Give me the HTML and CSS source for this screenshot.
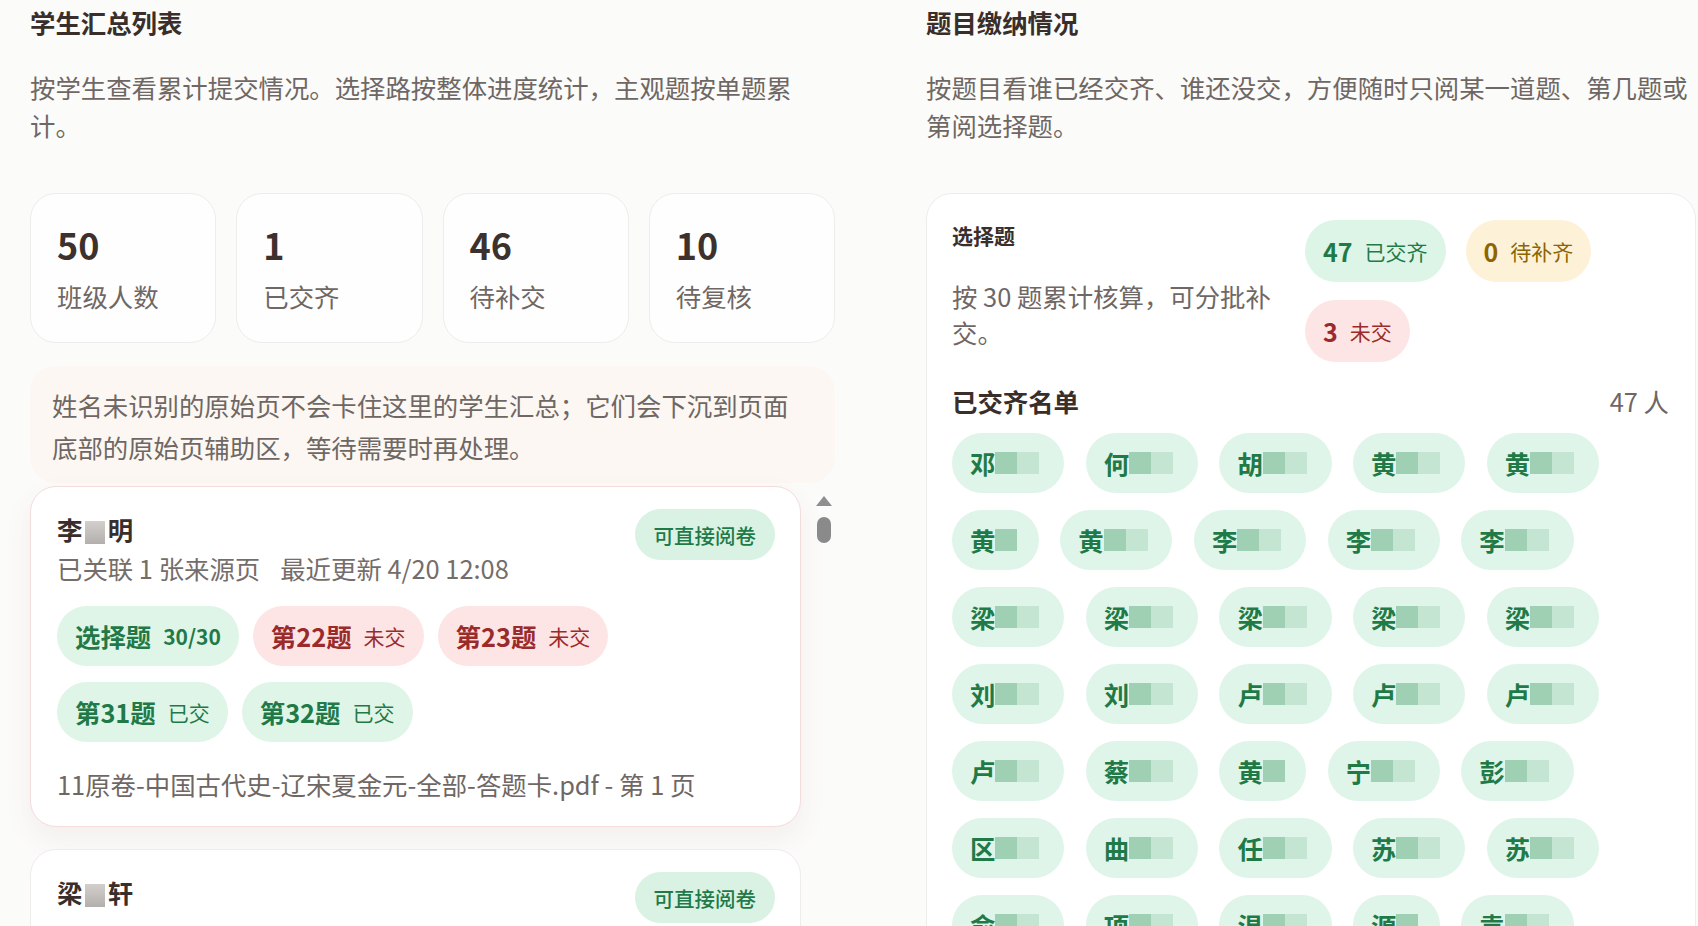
FILE: index.html
```html
<!DOCTYPE html>
<html lang="zh-CN">
<head>
<meta charset="utf-8">
<title>学生汇总列表</title>
<link rel="stylesheet" href="styles.css">
</head>
<body>
<div class="page">
  <section class="col">
    <h2 class="sec-title">学生汇总列表</h2>
    <p class="sec-desc">按学生查看累计提交情况。选择路按整体进度统计，主观题按单题累计。</p>
    <div class="stats">
      <div class="stat"><div class="stat-num">50</div><div class="stat-label">班级人数</div></div>
      <div class="stat"><div class="stat-num">1</div><div class="stat-label">已交齐</div></div>
      <div class="stat"><div class="stat-num">46</div><div class="stat-label">待补交</div></div>
      <div class="stat"><div class="stat-num">10</div><div class="stat-label">待复核</div></div>
    </div>
    <div class="notice">姓名未识别的原始页不会卡住这里的学生汇总；它们会下沉到页面底部的原始页辅助区，等待需要时再处理。</div>
    <div class="list-area">
      <div class="student-list">
        <article class="student-card alert">
          <div class="card-head">
            <div class="card-info">
              <div class="student-name">李<span class="name-blur"></span>明</div>
              <div class="student-meta"><span>已关联 1 张来源页</span><span>最近更新 4/20 12:08</span></div>
            </div>
            <span class="read-badge">可直接阅卷</span>
          </div>
          <div class="chips">
            <span class="chip ok"><span class="chip-main">选择题</span><span class="chip-sub num">30/30</span></span>
            <span class="chip miss"><span class="chip-main">第22题</span><span class="chip-sub">未交</span></span>
            <span class="chip miss"><span class="chip-main">第23题</span><span class="chip-sub">未交</span></span>
            <span class="chip ok"><span class="chip-main">第31题</span><span class="chip-sub">已交</span></span>
            <span class="chip ok"><span class="chip-main">第32题</span><span class="chip-sub">已交</span></span>
          </div>
          <div class="file-line">11原卷-中国古代史-辽宋夏金元-全部-答题卡.pdf - 第 1 页</div>
        </article>
        <article class="student-card">
          <div class="card-head">
            <div class="card-info">
              <div class="student-name">梁<span class="name-blur"></span>轩</div>
            </div>
            <span class="read-badge">可直接阅卷</span>
          </div>
          <div class="chips">
            <span class="chip ok"><span class="chip-main">选择题</span><span class="chip-sub num">30/30</span></span>
          </div>
        </article>
      </div>
      <div class="scrollbar"><span class="sb-arrow"></span><span class="sb-thumb"></span></div>
    </div>
  </section>

  <section class="col">
    <h2 class="sec-title">题目缴纳情况</h2>
    <p class="sec-desc">按题目看谁已经交齐、谁还没交，方便随时只阅某一道题、第几题或第阅选择题。</p>
    <div class="q-card">
      <div class="q-head">
        <div class="q-info">
          <h3 class="q-title">选择题</h3>
          <p class="q-desc">按 30 题累计核算，可分批补交。</p>
        </div>
        <div class="q-badges">
          <span class="q-badge green"><b>47</b>已交齐</span>
          <span class="q-badge yellow"><b>0</b>待补齐</span>
          <span class="q-badge red"><b>3</b>未交</span>
        </div>
      </div>
      <div class="done-head"><h3>已交齐名单</h3><span class="done-count">47 人</span></div>
      <div class="name-grid">
        <span class="name-chip">邓<span class="mosaic m2"><i></i><i></i></span></span>
        <span class="name-chip">何<span class="mosaic m2"><i></i><i></i></span></span>
        <span class="name-chip">胡<span class="mosaic m2"><i></i><i></i></span></span>
        <span class="name-chip">黄<span class="mosaic m2"><i></i><i></i></span></span>
        <span class="name-chip">黄<span class="mosaic m2"><i></i><i></i></span></span>
        <span class="name-chip">黄<span class="mosaic m1"><i></i></span></span>
        <span class="name-chip">黄<span class="mosaic m2"><i></i><i></i></span></span>
        <span class="name-chip">李<span class="mosaic m2"><i></i><i></i></span></span>
        <span class="name-chip">李<span class="mosaic m2"><i></i><i></i></span></span>
        <span class="name-chip">李<span class="mosaic m2"><i></i><i></i></span></span>
        <span class="name-chip">梁<span class="mosaic m2"><i></i><i></i></span></span>
        <span class="name-chip">梁<span class="mosaic m2"><i></i><i></i></span></span>
        <span class="name-chip">梁<span class="mosaic m2"><i></i><i></i></span></span>
        <span class="name-chip">梁<span class="mosaic m2"><i></i><i></i></span></span>
        <span class="name-chip">梁<span class="mosaic m2"><i></i><i></i></span></span>
        <span class="name-chip">刘<span class="mosaic m2"><i></i><i></i></span></span>
        <span class="name-chip">刘<span class="mosaic m2"><i></i><i></i></span></span>
        <span class="name-chip">卢<span class="mosaic m2"><i></i><i></i></span></span>
        <span class="name-chip">卢<span class="mosaic m2"><i></i><i></i></span></span>
        <span class="name-chip">卢<span class="mosaic m2"><i></i><i></i></span></span>
        <span class="name-chip">卢<span class="mosaic m2"><i></i><i></i></span></span>
        <span class="name-chip">蔡<span class="mosaic m2"><i></i><i></i></span></span>
        <span class="name-chip">黄<span class="mosaic m1"><i></i></span></span>
        <span class="name-chip">宁<span class="mosaic m2"><i></i><i></i></span></span>
        <span class="name-chip">彭<span class="mosaic m2"><i></i><i></i></span></span>
        <span class="name-chip">区<span class="mosaic m2"><i></i><i></i></span></span>
        <span class="name-chip">曲<span class="mosaic m2"><i></i><i></i></span></span>
        <span class="name-chip">任<span class="mosaic m2"><i></i><i></i></span></span>
        <span class="name-chip">苏<span class="mosaic m2"><i></i><i></i></span></span>
        <span class="name-chip">苏<span class="mosaic m2"><i></i><i></i></span></span>
        <span class="name-chip">俞<span class="mosaic m2"><i></i><i></i></span></span>
        <span class="name-chip">项<span class="mosaic m2"><i></i><i></i></span></span>
        <span class="name-chip">温<span class="mosaic m2"><i></i><i></i></span></span>
        <span class="name-chip">源<span class="mosaic m1"><i></i></span></span>
        <span class="name-chip">袁<span class="mosaic m2"><i></i><i></i></span></span>
        <span class="name-chip">王<span class="mosaic m2"><i></i><i></i></span></span>
        <span class="name-chip">吴<span class="mosaic m2"><i></i><i></i></span></span>
        <span class="name-chip">谢<span class="mosaic m2"><i></i><i></i></span></span>
        <span class="name-chip">杨<span class="mosaic m2"><i></i><i></i></span></span>
        <span class="name-chip">叶<span class="mosaic m2"><i></i><i></i></span></span>
        <span class="name-chip">张<span class="mosaic m2"><i></i><i></i></span></span>
        <span class="name-chip">张<span class="mosaic m2"><i></i><i></i></span></span>
        <span class="name-chip">赵<span class="mosaic m2"><i></i><i></i></span></span>
        <span class="name-chip">郑<span class="mosaic m2"><i></i><i></i></span></span>
        <span class="name-chip">钟<span class="mosaic m2"><i></i><i></i></span></span>
        <span class="name-chip">周<span class="mosaic m2"><i></i><i></i></span></span>
        <span class="name-chip">朱<span class="mosaic m2"><i></i><i></i></span></span>
      </div>
    </div>
  </section>
</div>
</body>
</html>
```

FILE: styles.css
```css
* {
  box-sizing: border-box;
  margin: 0;
  padding: 0;
}

html,
body {
  height: 100%;
}

body {
  background: #fbfbfa;
  font-family: "Noto Sans CJK SC", "Noto Sans", sans-serif;
  color: #3a2e2b;
  overflow: hidden;
}

.page {
  display: grid;
  grid-template-columns: 805px 770px;
  column-gap: 91px;
  padding: 5px 0 0 30px;
  align-items: start;
}

.sec-title {
  font-size: 25.4px;
  line-height: 35px;
  font-weight: 700;
  color: #3a2e2b;
}

.sec-desc {
  margin-top: 29px;
  max-width: 770px;
  font-size: 25.4px;
  line-height: 37.5px;
  color: #6f6764;
}

/* stats */
.stats {
  margin-top: 49px;
  display: grid;
  grid-template-columns: repeat(4, 1fr);
  gap: 20px;
}

.stat {
  height: 150px;
  border: 1px solid #efedec;
  border-radius: 26px;
  background: #fefefe;
  padding: 30px 26px 0;
}

.stat-num {
  font-size: 36px;
  line-height: 40px;
  font-weight: 700;
  color: #3d312d;
}

.stat-label {
  margin-top: 14px;
  font-size: 25.4px;
  line-height: 36px;
  color: #6f6764;
}

/* notice */
.notice {
  margin-top: 23px;
  background: #fcf7f2;
  border-radius: 26px;
  padding: 18px 24px 15px 22px;
  font-size: 25.4px;
  line-height: 42px;
  color: #6f6764;
}

/* student list */
.list-area {
  margin-top: 3px;
  display: flex;
  gap: 15px;
  align-items: flex-start;
}

.student-list {
  width: 771px;
  display: flex;
  flex-direction: column;
  gap: 22px;
}

.student-card {
  background: #fff;
  border: 1px solid #efecea;
  border-radius: 26px;
  padding: 22px 25px 24px 26px;
}

.student-card.alert {
  border-color: #f4dcdb;
  box-shadow: 0 12px 28px rgba(140, 80, 70, 0.07);
}

.card-head {
  display: flex;
  justify-content: space-between;
  align-items: flex-start;
}

.student-name {
  margin-top: 3px;
  font-size: 25.4px;
  line-height: 35px;
  font-weight: 700;
  color: #3a2e2b;
}

.name-blur {
  display: inline-block;
  width: 0.76em;
  height: 0.9em;
  margin: 0 0.12em;
  vertical-align: -0.14em;
  background: linear-gradient(180deg, #d2cfcd, #b3afad);
  filter: blur(0.7px);
}

.student-meta {
  margin-top: 3px;
  display: flex;
  gap: 20px;
  font-size: 25.4px;
  line-height: 36px;
  color: #756d6a;
}

.read-badge {
  height: 51px;
  padding: 0 19px;
  border-radius: 26px;
  background: #d9f2e4;
  color: #1f7a48;
  font-size: 20.5px;
  font-weight: 500;
  display: inline-flex;
  align-items: center;
  flex: none;
}

.chips {
  margin-top: 20px;
  display: flex;
  flex-wrap: wrap;
  gap: 16px 14px;
}

.chip {
  height: 60px;
  border-radius: 30px;
  padding: 0 18px;
  display: inline-flex;
  align-items: center;
  gap: 12px;
}

.chip-main {
  font-size: 25.4px;
  font-weight: 700;
}

.chip-sub {
  font-size: 21px;
}

.chip-sub.num {
  font-weight: 600;
}

.chip.ok {
  background: #dff5e8;
  color: #1f7a48;
}

.chip.miss {
  background: #fde5e5;
  color: #9b2b2b;
}

.file-line {
  margin-top: 24px;
  font-size: 25.4px;
  line-height: 36px;
  color: #6f6764;
}

/* decorative scrollbar */
.scrollbar {
  width: 16px;
  display: flex;
  flex-direction: column;
  align-items: center;
  padding-top: 10px;
}

.sb-arrow {
  width: 0;
  height: 0;
  border-left: 8px solid transparent;
  border-right: 8px solid transparent;
  border-bottom: 10px solid #8e8e8e;
}

.sb-thumb {
  margin-top: 11px;
  width: 14px;
  height: 26px;
  border-radius: 7px;
  background: #8a8a8a;
}

/* right card */
.q-card {
  margin-top: 49px;
  border: 1px solid #efedec;
  border-radius: 26px;
  background: #fff;
  padding: 26px 26px 40px 25px;
}

.q-head {
  display: flex;
  gap: 18px;
}

.q-info {
  flex: 1;
  min-width: 0;
}

.q-title {
  font-size: 21px;
  line-height: 30px;
  font-weight: 700;
  color: #3a2e2b;
}

.q-desc {
  margin-top: 28px;
  font-size: 25.4px;
  line-height: 36px;
  color: #6f6764;
}

.q-badges {
  width: 364px;
  flex: none;
  display: flex;
  flex-wrap: wrap;
  align-content: flex-start;
  gap: 18px 20px;
}

.q-badge {
  height: 62px;
  padding: 0 18px;
  border-radius: 31px;
  display: inline-flex;
  align-items: center;
  gap: 12px;
  font-size: 21px;
}

.q-badge b {
  font-size: 25px;
  font-weight: 700;
}

.q-badge.green {
  background: #ddf5e7;
  color: #1f7a48;
}

.q-badge.yellow {
  background: #fdf2d8;
  color: #8d6400;
}

.q-badge.red {
  background: #fde5e5;
  color: #9b2b2b;
}

.done-head {
  margin-top: 21px;
  display: flex;
  justify-content: space-between;
  font-size: 25.4px;
  line-height: 36px;
}

.done-head h3 {
  font-size: inherit;
  font-weight: 700;
  color: #3a2e2b;
}

.done-count {
  color: #6f6764;
}

.name-grid {
  margin-top: 14px;
  display: flex;
  flex-wrap: wrap;
  gap: 17px 21.5px;
}

.name-chip {
  height: 60px;
  padding: 0 18px;
  border-radius: 30px;
  background: #e0f5e9;
  color: #1f7a48;
  font-size: 25.4px;
  font-weight: 700;
  display: inline-flex;
  align-items: center;
}

.mosaic {
  display: inline-flex;
  height: 22px;
}

.mosaic.m2 {
  width: 2em;
}

.mosaic.m1 {
  width: 1em;
}

.mosaic i {
  display: block;
  width: 22px;
  height: 22px;
  background: #c3e5d1;
}

.mosaic i:first-child {
  background: #9fd0b4;
}
```
